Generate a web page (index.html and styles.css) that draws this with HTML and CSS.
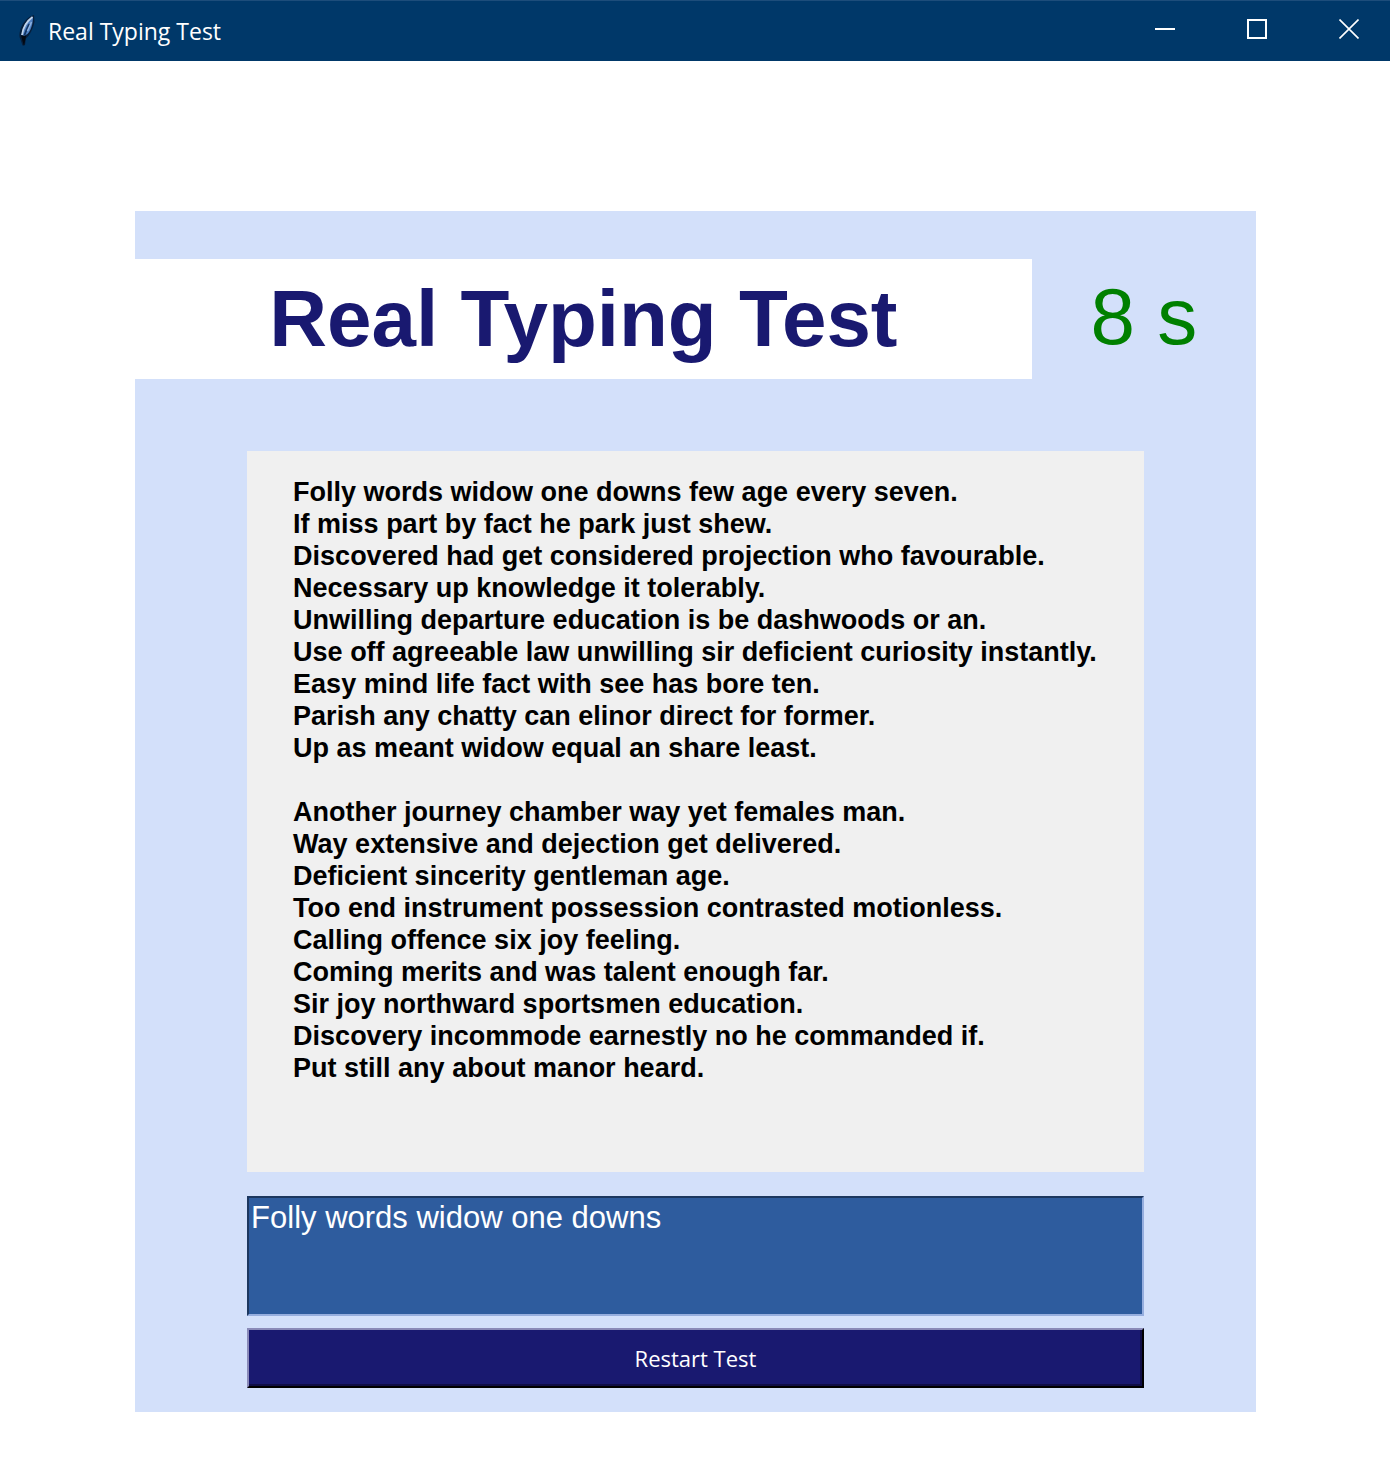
FILE: index.html
```html
<!DOCTYPE html>
<html lang="en">
<head>
<meta charset="utf-8">
<title>Real Typing Test</title>
<link rel="stylesheet" href="styles.css">
</head>
<body>
<header class="titlebar">
  <svg class="feather" width="18" height="34" viewBox="0 0 18 34" aria-hidden="true">
    <path d="M16 1C10 2.500 5 8 2.500 15C1 20 1 23 2.500 25.500L4.500 31.500L7 31L8 24.500C12 21 15 15 16.500 8Z" fill="#07182f" opacity=".8"/>
    <path d="M15 2.500C9.500 5.500 4.500 12 3.500 22L6 22L9.500 20C13 16 15 10 15 2.500Z" fill="#4f80c2"/>
    <path d="M14.500 3C9 7 5 13 4 21" fill="none" stroke="#c0d3ea" stroke-width="1.800"/>
    <path d="M11.500 10C9.500 13 8 17 6.500 21" fill="none" stroke="#123360" stroke-width="1.800"/>
    <path d="M13.500 8L9.500 17" stroke="#8fb2e0" stroke-width="1.500"/>
    <path d="M3 21L8 22L6 32L4.500 27Z" fill="#030912"/>
  </svg>
  <span class="window-title">Real Typing Test</span>
  <div class="window-controls">
    <button class="window-button" type="button" aria-label="Minimize">
      <svg width="20" height="20" viewBox="0 0 20 20"><path d="M0 10H20" stroke="#fff" stroke-width="2"/></svg>
    </button>
    <button class="window-button" type="button" aria-label="Maximize">
      <svg width="20" height="20" viewBox="0 0 20 20"><path d="M1 1H19V19H1Z" fill="none" stroke="#fff" stroke-width="2"/></svg>
    </button>
    <button class="window-button" type="button" aria-label="Close">
      <svg width="20" height="20" viewBox="0 0 20 20"><path d="M.5.5L19.500 19.500M19.500.5L.5 19.500" stroke="#fff" stroke-width="1.600"/></svg>
    </button>
  </div>
</header>
<main class="panel">
  <div class="heading-row">
    <h1 class="heading">Real Typing Test</h1>
    <div class="timer">8 s</div>
  </div>
  <div class="test">
    <div class="passage">
      <p class="verse">Folly words widow one downs few age every seven.<br>
      If miss part by fact he park just shew.<br>
      Discovered had get considered projection who favourable.<br>
      Necessary up knowledge it tolerably.<br>
      Unwilling departure education is be dashwoods or an.<br>
      Use off agreeable law unwilling sir deficient curiosity instantly.<br>
      Easy mind life fact with see has bore ten.<br>
      Parish any chatty can elinor direct for former.<br>
      Up as meant widow equal an share least.</p>
      <p class="verse">Another journey chamber way yet females man.<br>
      Way extensive and dejection get delivered.<br>
      Deficient sincerity gentleman age.<br>
      Too end instrument possession contrasted motionless.<br>
      Calling offence six joy feeling.<br>
      Coming merits and was talent enough far.<br>
      Sir joy northward sportsmen education.<br>
      Discovery incommode earnestly no he commanded if.<br>
      Put still any about manor heard.</p>
    </div>
    <textarea class="entry" aria-label="Type the text here" spellcheck="false">Folly words widow one downs</textarea>
    <button class="restart" type="button">Restart Test</button>
  </div>
</main>
</body>
</html>
```
FILE: styles.css
```css
* {
  box-sizing: border-box;
}

body {
  margin: 0;
  background: #fff;
  font-family: "Liberation Sans", Arial, sans-serif;
}

.titlebar {
  display: flex;
  align-items: center;
  height: 61px;
  padding-left: 18px;
  border-top: 1px solid #1d4d7b;
  background: #003869;
  color: #fff;
}

.feather {
  flex: none;
}

.window-title {
  flex: 1;
  margin-left: 12px;
  font: 23px/32px "Open Sans", "Noto Sans", sans-serif;
}

.window-controls {
  display: flex;
  gap: 10px;
}

.window-button {
  display: flex;
  align-items: center;
  justify-content: center;
  width: 82px;
  height: 56px;
  margin-bottom: 4px;
  padding: 0;
  border: 0;
  background: transparent;
}

.panel {
  margin: 150px 134px 66px 135px;
  padding: 48px 0 24px;
  background: #d3e0fa;
}

.heading-row {
  display: flex;
  align-items: stretch;
  height: 120px;
}

.heading {
  width: 80%;
  margin: 0;
  background: #fff;
  color: #191970;
  font-size: 80px;
  line-height: 120px;
  text-align: center;
}

.timer {
  flex: 1;
  color: #008000;
  font-size: 80px;
  line-height: 116px;
  text-align: center;
}

.test {
  display: flex;
  flex-direction: column;
  margin: 72px 10% 0;
}

.passage {
  padding: 25px 46px 88px;
  background: #f0f0f0;
  color: #000;
  font-size: 27px;
  font-weight: bold;
  line-height: 32px;
}

.verse {
  margin: 0;
  white-space: nowrap;
}

.verse + .verse {
  margin-top: 32px;
}

.entry {
  height: 120px;
  margin-top: 24px;
  padding: 2px;
  border: 2px solid;
  border-color: #1c375f #96aede #96aede #1c375f;
  border-radius: 0;
  outline: 0;
  background: #2e5c9e;
  color: #fff;
  font: 31px/36px "Liberation Sans", Arial, sans-serif;
  resize: none;
}

.restart {
  height: 60px;
  margin-top: 12px;
  padding: 0;
  border: 2px solid;
  border-color: #8a8ab8 #000 #000 #8a8ab8;
  border-radius: 0;
  background: #191970;
  box-shadow: inset -2px -2px #100e46;
  color: #fff;
  font: 22px/32px "Open Sans", "Noto Sans", sans-serif;
}
```
